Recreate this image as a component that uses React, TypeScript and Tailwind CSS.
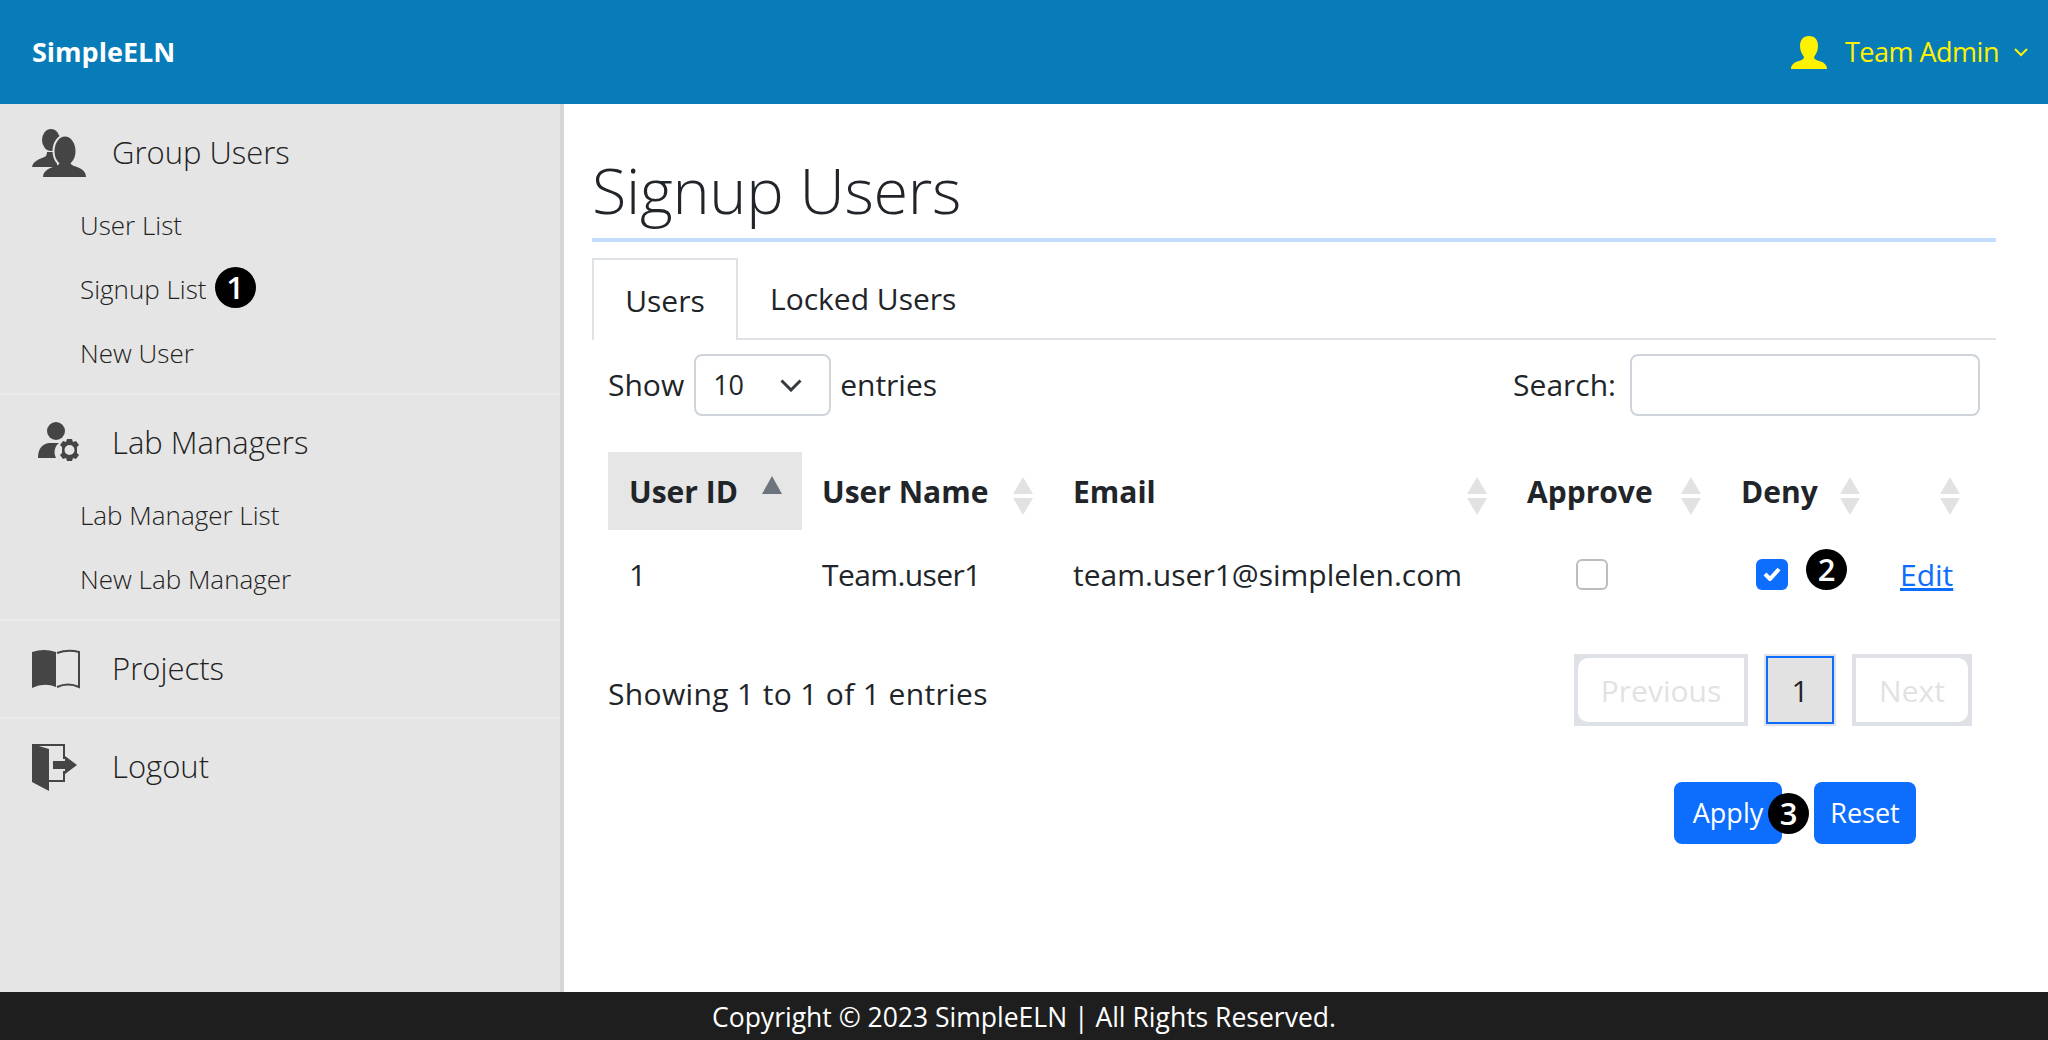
import { ReactNode } from "react";

function UsersIcon() {
  return (
    <svg width="54" height="48" viewBox="0 0 54 48" fill="#454545">
      <ellipse cx="19" cy="11" rx="9" ry="11" />
      <path d="M0 38c1-5 5-7 10-9 3-1 5-2 5-6h10v15z" />
      <ellipse cx="33" cy="22" rx="11.500" ry="15.500" stroke="#e5e5e5" strokeWidth="2" />
      <path d="M11 48c0-6 6-9 13-11 3-1 4-3 4-5h10c0 2 1 4 4 5 7 2 12 5 12 11z" />
    </svg>
  );
}

function ManagerIcon() {
  return (
    <svg width="42" height="42" viewBox="0 0 42 42" fill="#454545">
      <circle cx="18" cy="9" r="9" />
      <path d="M0 36c0-9 4-14 11-15h10c-4 3-6 9-3 15H0z" />
      <path
        fillRule="evenodd"
        d="M29 17h5l1 3 3-1 3 4-2 2v6l2 2-3 4-3-1-1 3h-5l-1-3-3 1-3-4 2-2v-6l-2-2 3-4 3 1 1-3zm2.500 6a5 5 0 1 0 0 10 5 5 0 0 0 0-10z"
      />
    </svg>
  );
}

function BookIcon() {
  return (
    <svg width="48" height="40" viewBox="0 0 48 40" fill="#454545">
      <path d="M0 3Q12-1 24 3v35Q12 33 0 39z" />
      <path d="M25 4Q36 0 47 3v35Q36 33 25 38" fill="none" stroke="#454545" strokeWidth="2" />
    </svg>
  );
}

function DoorIcon() {
  return (
    <svg width="45" height="47" viewBox="0 0 45 47" fill="#454545">
      <path d="M0 0l17 5v42L0 38z" />
      <path d="M0 0h33v15h-2V2H0zM31 27h2v11H17v-2h14z" />
      <path d="M21 17h12v-5l12 9-12 9v-5H21z" />
    </svg>
  );
}

function HeaderUserIcon() {
  return (
    <svg width="36" height="33" viewBox="0 0 36 33" fill="#fff200">
      <path d="M18 0c6 0 9 4 9 10 0 5-2 8-4 11 0 2 2 3 5 4 5 1 8 4 8 8H0c0-4 3-7 8-8 3-1 5-2 5-4-2-3-4-6-4-11C9 4 12 0 18 0z" />
    </svg>
  );
}

function SortArrows() {
  return (
    <svg width="20" height="38" viewBox="0 0 20 38" className="mt-[10px] shrink-0">
      <path d="M10 0l10 17H0z" fill="#e2e2e2" />
      <path d="M10 38L0 21h20z" fill="#e2e2e2" />
    </svg>
  );
}

function Badge({ n }: { n: number }) {
  return (
    <span className="flex h-[41px] w-[41px] items-center justify-center rounded-full bg-black text-[31px] font-semibold leading-none text-white">
      {n}
    </span>
  );
}

function MenuGroup({ icon, title, children }: { icon: ReactNode; title: string; children?: ReactNode }) {
  return (
    <div className="border-b-2 border-[#ebebeb] last:border-b-0">
      <div className="flex h-[96px] items-center">
        <div className="flex w-[112px] justify-start pl-[32px]">{icon}</div>
        <span className="mb-[2px] text-[31px] font-light text-[#222]">{title}</span>
      </div>
      {children && <div className="-mt-[8px] pb-[8px]">{children}</div>}
    </div>
  );
}

function SubItem({ children }: { children: ReactNode }) {
  return <div className="flex h-[64px] items-center gap-[8px] pl-[80px] text-[26px] font-light text-[#222]">{children}</div>;
}

function PagerButton({ label, width, corner }: { label: string; width: string; corner: string }) {
  return (
    <div className={`${width} h-[72px] bg-[#dee2e6] p-[4px]`}>
      <div className={`${corner} flex h-full items-center justify-center bg-white text-[#e2e2e2]`}>{label}</div>
    </div>
  );
}

export default function App() {
  return (
    <div className="flex h-screen flex-col overflow-hidden bg-white font-['Open_Sans',sans-serif] text-[#212529]">
      <header className="flex h-[104px] items-center justify-between bg-[#077cb9] pl-[32px] pr-[20px]">
        <span className="text-[27px] font-bold text-white">SimpleELN</span>
        <div className="flex items-center text-[#fff200]">
          <HeaderUserIcon />
          <span className="ml-[18px] text-[27px] tracking-[-0.5px]">Team Admin</span>
          <svg width="14" height="9" viewBox="0 0 14 9" className="ml-[15px]" fill="none" stroke="#fff200" strokeWidth="2">
            <path d="M1 1l6 6 6-6" />
          </svg>
        </div>
      </header>

      <div className="flex min-h-0 flex-1">
        <aside className="w-[564px] shrink-0 border-r-4 border-[#d6d6d6] bg-[#e5e5e5] pt-[1px]">
          <MenuGroup icon={<UsersIcon />} title="Group Users">
            <SubItem>User List</SubItem>
            <SubItem>
              Signup List <span className="mb-[4px]"><Badge n={1} /></span>
            </SubItem>
            <SubItem>New User</SubItem>
          </MenuGroup>
          <MenuGroup icon={<div className="pl-[6px]"><ManagerIcon /></div>} title="Lab Managers">
            <SubItem>Lab Manager List</SubItem>
            <SubItem>New Lab Manager</SubItem>
          </MenuGroup>
          <MenuGroup icon={<BookIcon />} title="Projects" />
          <MenuGroup icon={<DoorIcon />} title="Logout" />
        </aside>

        <main className="flex-1 pl-[28px] pr-[52px]">
          <h1 className="mt-[36px] h-[102px] border-b-4 border-[#c2dbfe] text-[63px] font-light leading-[100px] tracking-[-0.3px]">Signup Users</h1>

          <div className="mt-[16px] flex h-[82px] border-b-2 border-[#dee2e6] text-[30px]">
            <div className="flex h-[82px] w-[146px] items-center justify-center border-2 border-b-0 border-[#dee2e6] bg-white">Users</div>
            <div className="flex h-[80px] items-center pl-[32px]">Locked Users</div>
          </div>

          <div className="px-[16px] text-[30px]">
            <div className="mt-[14px] flex h-[62px] items-center justify-between">
              <div className="flex items-center">
                <span className="mb-[2px]">Show</span>
                <div className="ml-[10px] mr-[9px] flex h-[62px] w-[137px] items-center justify-between rounded-lg border-2 border-[#ced4da] pl-[17px] pr-[27px] text-[27px]">
                  10
                  <svg width="22" height="13" viewBox="0 0 22 13" fill="none" stroke="#343a40" strokeWidth="3">
                    <path d="M1.500 1.500L11 11l9.500-9.500" />
                  </svg>
                </div>
                <span className="mb-[2px]">entries</span>
              </div>
              <div className="flex items-center">
                <span className="mb-[2px]">Search:</span>
                <div className="ml-[14px] h-[62px] w-[350px] rounded-lg border-2 border-[#ced4da]" />
              </div>
            </div>

            <table className="mt-[36px] w-[1372px] table-fixed border-collapse">
              <thead>
                <tr className="h-[78px] text-left font-bold">
                  <th className="w-[194px] bg-[#e6e6e6] pl-[21px]">
                    <div className="flex items-center justify-between pr-[20px]">
                      User ID
                      <svg width="20" height="18" viewBox="0 0 20 18" className="mb-[12px]"><path d="M10 0l10 18H0z" fill="#6c757d" /></svg>
                    </div>
                  </th>
                  {[
                    ["User Name", "w-[251px]"],
                    ["Email", "w-[454px]"],
                    ["Approve", "w-[214px]"],
                    ["Deny", "w-[159px]"],
                    ["", "w-[100px]"],
                  ].map(([label, width]) => (
                    <th key={label} className={`${width} pl-[20px] pr-[20px]`}>
                      <div className="flex h-[40px] items-center justify-between">
                        {label}
                        <span className="ml-auto"><SortArrows /></span>
                      </div>
                    </th>
                  ))}
                </tr>
              </thead>
              <tbody>
                <tr className="h-[88px]">
                  <td className="pl-[21px]">1</td>
                  <td className="pl-[20px] tracking-[-0.6px]">Team.user1</td>
                  <td className="pl-[20px] whitespace-nowrap">team.user1@simplelen.com</td>
                  <td>
                    <div className="ml-[69px] h-[31px] w-[32px] rounded-md border-2 border-[#bdbdbd] bg-white" />
                  </td>
                  <td>
                    <div className="relative ml-[35px] flex h-[31px] w-[32px] items-center justify-center rounded-md bg-[#0d6efd]">
                      <svg width="18" height="14" viewBox="0 0 18 14" fill="none" stroke="#fff" strokeWidth="4">
                        <path d="M2 7l5 5 9-10" />
                      </svg>
                      <span className="absolute left-[50px] top-[-10px]"><Badge n={2} /></span>
                    </div>
                  </td>
                  <td className="pl-[20px]">
                    <a className="text-[#0d6efd] underline">Edit</a>
                  </td>
                </tr>
              </tbody>
            </table>

            <div className="mt-[36px] flex items-center justify-between pr-[8px]">
              <span className="pt-[6px] tracking-[0.35px]">Showing 1 to 1 of 1 entries</span>
              <div className="flex gap-[16px]">
                <PagerButton label="Previous" width="w-[174px]" corner="rounded-l-[10px]" />
                <div className="h-[72px] w-[72px] bg-[#dee2e6] p-[2px]">
                  <div className="flex h-full items-center justify-center border-2 border-[#0d6efd] bg-[#e2e2e2]">1</div>
                </div>
                <PagerButton label="Next" width="w-[120px]" corner="rounded-r-[10px]" />
              </div>
            </div>

            <div className="mt-[56px] flex justify-end gap-[32px] pr-[64px] text-[27px] text-white">
              <div className="relative flex h-[62px] w-[108px] items-center justify-center rounded-lg bg-[#0d6efd]">
                Apply
                <span className="absolute left-[94px] top-[11px]"><Badge n={3} /></span>
              </div>
              <div className="flex h-[62px] w-[102px] items-center justify-center rounded-lg bg-[#0d6efd]">Reset</div>
            </div>
          </div>
        </main>
      </div>

      <footer className="flex h-[48px] items-center justify-center bg-[#1e1e1e] pt-[3px] text-[26.5px] text-white">
        Copyright © 2023 SimpleELN | All Rights Reserved.
      </footer>
    </div>
  );
}
